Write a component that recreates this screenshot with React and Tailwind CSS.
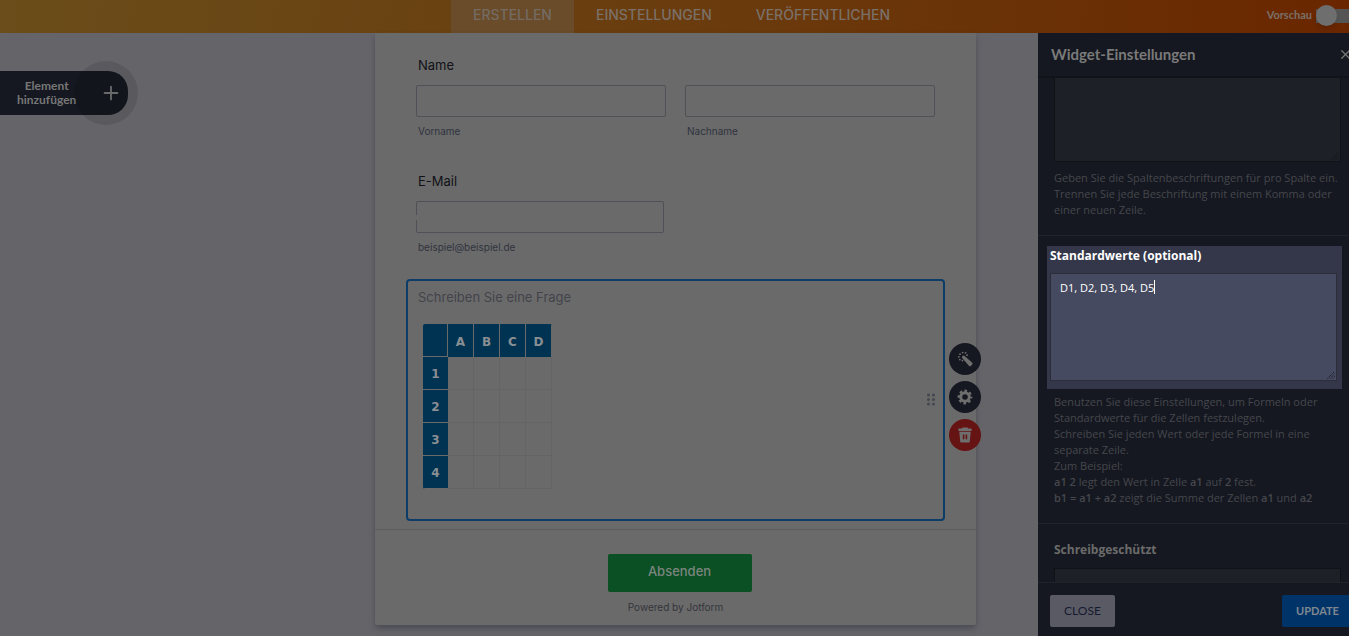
import React, { useState } from 'react'
import { Plus, X } from 'lucide-react'

const tabs = ['ERSTELLEN', 'EINSTELLUNGEN', 'VERÖFFENTLICHEN']
const columns = ['A', 'B', 'C', 'D']
const rows = [1, 2, 3, 4]

const Header = () => {
  const [active, setActive] = useState('ERSTELLEN')

  return (
    <header className="grid h-[33px] shrink-0 grid-cols-[1fr_auto_1fr] bg-linear-100 from-[#6a4d1a] via-[#6a3c0e] to-[#6a2600] pl-[14px]">
      <nav className="col-start-2 flex font-[Inter,sans-serif]">
        {tabs.map((tab) => (
          <button
            key={tab}
            onClick={() => setActive(tab)}
            className={`px-[22px] pb-[3px] text-[14px] leading-5 font-medium ${
              active === tab ? 'bg-[#6a4b2a] text-[#746c62]' : 'text-[#7a7068]'
            }`}
          >
            {tab}
          </button>
        ))}
      </nav>
      <label className="flex items-center justify-end gap-1 overflow-hidden pb-0.5 text-[11px] font-bold text-[#7a7068]">
        Vorschau
        <input type="checkbox" role="switch" className="peer sr-only" />
        <span className="flex h-[14px] w-[33px] items-center bg-[#555555]">
          <span className="h-[21px] w-[21px] rounded-full bg-[#6e6e6e] shadow-md"></span>
        </span>
      </label>
    </header>
  )
}

const AddElement = () => (
  <div className="pt-[38px]">
    <button className="relative flex h-11 w-32 items-center justify-between rounded-r-[20px] bg-[#151820] pr-1.5 pl-[17px] text-[#777777]">
      <span className="absolute -top-[10px] -right-[10px] h-16 w-16 rounded-full bg-black/10"></span>
      <span className="text-center text-[12px] leading-[14px] font-bold">
        Element
        <br />
        hinzufügen
      </span>
      <Plus className="h-[22px] w-[22px]" strokeWidth={2} />
    </button>
  </div>
)

const Field = ({ id, hint, className }) => (
  <div className={className}>
    <input
      id={id}
      aria-label={hint}
      className="block h-8 w-full rounded-xs border border-[#505157] px-2 text-[13px] text-[#111217] outline-none"
    />
    <label htmlFor={id} className="mt-1.5 block pl-0.5 text-[10px] leading-4 text-[#30333e]">
      {hint}
    </label>
  </div>
)

const WandIcon = () => (
  <svg viewBox="0 0 16 16" className="h-4 w-4" fill="currentColor">
    <path d="M5.4 7.2a1.4 1.4 0 0 1 0-2l.2-.2a1.4 1.4 0 0 1 2 0l7.4 6.6a1.6 1.6 0 0 1 0 2.2l-.9.9a1.6 1.6 0 0 1-2.2 0z" />
    <circle cx="5.6" cy="1.6" r="0.9" />
    <circle cx="8.6" cy="1.8" r="0.9" />
    <circle cx="3" cy="3.2" r="0.9" />
    <circle cx="1.8" cy="5.8" r="0.9" />
    <circle cx="2.8" cy="8.6" r="0.9" />
    <circle cx="5.4" cy="9.6" r="0.9" />
    <circle cx="10" cy="4.2" r="0.9" />
  </svg>
)

const GearIcon = () => (
  <svg viewBox="0 0 16 16" className="h-4 w-4" fill="none" stroke="currentColor">
    <circle cx="8" cy="8" r="4.3" strokeWidth="3" />
    <circle cx="8" cy="8" r="6.2" strokeWidth="2.4" strokeDasharray="2.6 2.27" strokeDashoffset="1.3" />
  </svg>
)

const TrashIcon = () => (
  <svg viewBox="0 0 14 16" className="h-4 w-[14px]" fill="currentColor">
    <path d="M4.5 0.5h5l.6 1H13a.6.6 0 0 1 .6.6V4H.4V2.1a.6.6 0 0 1 .6-.6h2.9z" />
    <path fillRule="evenodd" d="M1.3 4.8h11.4l-.9 9.6a1.4 1.4 0 0 1-1.4 1.2H3.6a1.4 1.4 0 0 1-1.4-1.2zM4.8 7.6v4.6h1.6V7.6zM7.6 7.6v4.6h1.6V7.6z" />
  </svg>
)

const DragDots = () => (
  <svg viewBox="0 0 8 13" className="h-[13px] w-2" fill="#45464f">
    {[2, 6.5, 11].map((y) => (
      <React.Fragment key={y}>
        <circle cx="1.5" cy={y} r="1.5" />
        <circle cx="6.5" cy={y} r="1.5" />
      </React.Fragment>
    ))}
  </svg>
)

const TableQuestion = () => (
  <section className="relative mt-6 rounded-sm border-2 border-[#0b3d68] px-[10px] pt-1.5 pb-[30px]">
    <p className="text-[13px] leading-5 text-[#43444a]">Schreiben Sie eine Frage</p>
    <table className="mt-[17px] ml-[5px] border-separate border-spacing-0 overflow-hidden rounded-xs font-['DejaVu_Sans'] text-[12px] font-bold text-[#8a8f93]">
      <thead>
        <tr>
          <th className="h-[33px] w-[25px] border-r border-b border-[#6a6a6a] bg-[#003352]"></th>
          {columns.map((col) => (
            <th key={col} className="h-[33px] w-[26px] border-r border-[#6a6a6a] bg-[#003352] pt-0.5">
              {col}
            </th>
          ))}
        </tr>
      </thead>
      <tbody>
        {rows.map((row) => (
          <tr key={row}>
            <th className="h-[33px] border-b border-[#6a6a6a] bg-[#003352] pt-0.5">{row}</th>
            {columns.map((col) => (
              <td key={col} className="border-r border-b border-[#646464]"></td>
            ))}
          </tr>
        ))}
      </tbody>
    </table>
    <div className="absolute top-[112px] right-2">
      <DragDots />
    </div>
    <div className="absolute top-[62px] -right-[38px] flex flex-col gap-[6px] text-[#6e6e6e]">
      <button aria-label="Assistent" className="flex h-8 w-8 items-center justify-center rounded-full bg-[#151820]">
        <WandIcon />
      </button>
      <button aria-label="Einstellungen" className="flex h-8 w-8 items-center justify-center rounded-full bg-[#151820]">
        <GearIcon />
      </button>
      <button aria-label="Löschen" className="flex h-8 w-8 items-center justify-center rounded-full bg-[#661313]">
        <TrashIcon />
      </button>
    </div>
  </section>
)

const FormCard = () => (
  <main className="self-start rounded-b-xs bg-[#6a6a6a] font-[Inter,sans-serif] shadow-md shadow-[#4c4c55]">
    <div className="px-[31px] pt-[22px] pb-2">
      <div className="px-[10px]">
        <h2 className="pl-0.5 text-[13px] leading-5 text-[#111217]">Name</h2>
        <div className="mt-[10px] grid grid-cols-2 gap-[19px]">
          <Field id="first" hint="Vorname" />
          <Field id="last" hint="Nachname" />
        </div>
        <h2 className="mt-8 pl-0.5 text-[13px] leading-5 text-[#111217]">E-Mail</h2>
        <div className="relative mt-[10px] w-[248px]">
          <Field id="mail" hint="beispiel@beispiel.de" />
          <span className="absolute top-[14px] left-0 h-[5px] w-px bg-[#6a6a6a]"></span>
        </div>
      </div>
      <TableQuestion />
    </div>
    <div className="flex flex-col items-center border-t border-[#5d5d61] pt-6 pb-[10px] pl-2">
      <button className="h-[38px] w-36 rounded-xs bg-[#0a5024] pb-0.5 text-[13px] font-medium text-[#7b857e]">
        Absenden
      </button>
      <p className="mt-[7px] mr-2 text-[10px] leading-4 text-[#34353b]">Powered by Jotform</p>
    </div>
  </main>
)

const ResizeGrip = () => (
  <svg viewBox="0 0 8 8" className="pointer-events-none absolute right-0.5 bottom-0.5 h-2 w-2" stroke="#101217" strokeDasharray="1 1">
    <path d="M0.5 7.5l7-7M3 7.5l4.5-4.5M5.5 7.5l2-2" />
  </svg>
)

const SettingsPanel = () => {
  const [defaults, setDefaults] = useState('D1, D2, D3, D4, D5')

  return (
    <aside className="flex min-h-0 w-[311px] flex-col justify-self-end overflow-hidden bg-[#151820]">
      <div className="flex h-[45px] shrink-0 items-center justify-between border-b-2 border-[#111318] pl-[13px]">
        <h2 className="pb-0.5 text-[15px] leading-5 font-bold text-[#7a7a7a]">Widget-Einstellungen</h2>
        <button aria-label="Schließen" className="-mr-1 text-[#777777]">
          <X className="h-[15px] w-[15px]" />
        </button>
      </div>

      <div className="min-h-0 flex-1 overflow-hidden font-['Open_Sans',sans-serif] text-[11px] leading-4 text-[#45474d]">
        <div className="border-b border-[#20232b] pr-2 pb-[17px] pl-4">
          <div className="relative w-[287px]">
            <textarea
              aria-label="Spaltenbeschriftungen"
              className="block h-[84px] w-full resize-none border border-t-0 border-[#101217] bg-[#1e2028]"
            />
            <ResizeGrip />
          </div>
          <p className="mt-2">
            Geben Sie die Spaltenbeschriftungen für pro Spalte ein.
            <br />
            Trennen Sie jede Beschriftung mit einem Komma oder
            <br />
            einer neuen Zeile.
          </p>
        </div>

        <div className="border-b border-[#20232b] pt-[10px] pb-[17px]">
          <div className="mr-[7px] ml-[9px] bg-[#343749] px-[3px] pt-0.5 pb-2">
            <label htmlFor="defaults" className="block text-[12px] leading-4 font-bold text-white">
              Standardwerte (optional)
            </label>
            <div className="relative mt-[9px] w-[287px]">
              <textarea
                id="defaults"
                value={defaults}
                onChange={(e) => setDefaults(e.target.value)}
                className="block h-[108px] w-full resize-none border border-[#2b2d39] bg-[#454a60] px-[9px] py-1.5 text-[11px] leading-4 font-medium text-white outline-none"
              />
              <span className="absolute top-[7px] left-[104px] h-[14px] w-px bg-white"></span>
              <ResizeGrip />
            </div>
          </div>
          <p className="mt-[5px] pl-4">
            Benutzen Sie diese Einstellungen, um Formeln oder
            <br />
            Standardwerte für die Zellen festzulegen.
            <br />
            Schreiben Sie jeden Wert oder jede Formel in eine
            <br />
            separate Zeile.
            <br />
            Zum Beispiel:
            <br />
            <b className="font-semibold">a1 2</b> legt den Wert in Zelle <b className="font-semibold">a1</b> auf{' '}
            <b className="font-semibold">2</b> fest.
            <br />
            <b className="font-semibold">b1 = a1 + a2</b> zeigt die Summe der Zellen{' '}
            <b className="font-semibold">a1</b> und <b className="font-semibold">a2</b>
          </p>
        </div>

        <div className="px-4 pt-[18px]">
          <label htmlFor="readonly" className="block text-[12px] font-bold text-[#6b6b6b]">
            Schreibgeschützt
          </label>
          <textarea
            id="readonly"
            className="mt-[10px] block h-[84px] w-[287px] resize-none border border-[#101217] bg-[#1e2028]"
          />
        </div>
      </div>

      <div className="flex shrink-0 justify-between border-t border-[#20232b] pt-3 pb-[9px] pl-3">
        <button className="h-8 w-[65px] rounded-xs bg-[#5a5a64] text-[12px] text-[#151a30]">CLOSE</button>
        <button className="h-8 w-[67px] rounded-l-xs bg-[#003468] pl-1 text-[11px] font-bold text-[#7f8891]">UPDATE</button>
      </div>
    </aside>
  )
}

const App = () => (
  <div className="flex h-screen flex-col overflow-hidden bg-[#656469] font-[Lato,sans-serif]">
    <Header />
    <div className="grid min-h-0 flex-1 grid-cols-[1fr_601px_373px] grid-rows-1">
      <AddElement />
      <FormCard />
      <SettingsPanel />
    </div>
  </div>
)

export default App
